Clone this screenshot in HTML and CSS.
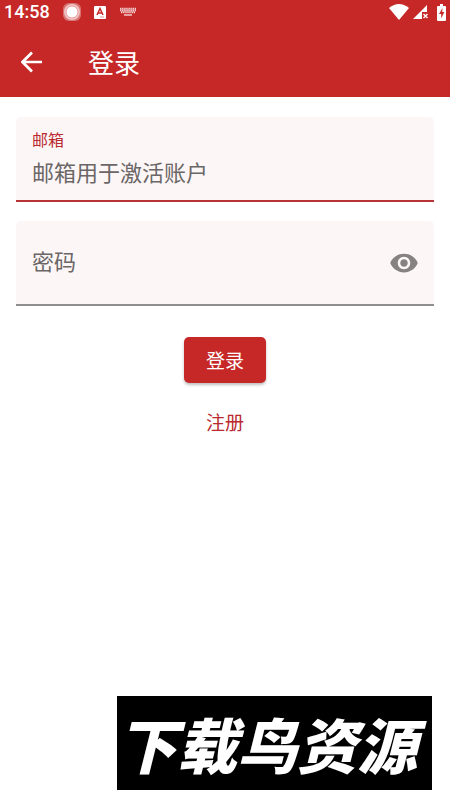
FILE: index.html
```html
<!DOCTYPE html>
<html lang="zh-CN">
<head>
<meta charset="utf-8">
<meta name="viewport" content="width=device-width, initial-scale=1">
<title>登录</title>
<link rel="stylesheet" href="styles.css">
</head>
<body>
<header class="top">
  <div class="status">
    <span class="clock">14:58</span>
    <svg class="record" width="20" height="20" viewBox="0 0 20 20" aria-hidden="true">
      <rect x="1" y="1" width="18" height="18" rx="6" fill="#fff" opacity=".35"/>
      <circle cx="10" cy="10" r="8" fill="#fff" opacity=".6"/>
      <circle cx="10" cy="10" r="6" fill="#fff" stroke="#e79a9a"/>
    </svg>
    <svg class="input-mode" width="12" height="14" viewBox="0 0 12 14" aria-hidden="true">
      <rect width="12" height="13" y="1" rx="1" fill="#fff"/>
      <path d="M3 10 6 3.5 9 10M4.2 8h3.6" fill="none" stroke="#c62828" stroke-width="1.5"/>
      <path d="M6 12h4" stroke="#e79a9a"/>
    </svg>
    <svg class="keyboard" width="16" height="10" viewBox="0 0 16 10" aria-hidden="true">
      <path d="M0 1.5h16M0 3.5h16M1 5.5h14" stroke="#fff" stroke-width="1.4" stroke-dasharray="1.4 .7" opacity=".8"/>
      <path d="M0 2.5h16M1 4.5h14" stroke="#fff" opacity=".35"/>
      <path d="M4 8h8" stroke="#fff" stroke-width="1.4" opacity=".8"/>
    </svg>
    <div class="signals">
      <svg width="20" height="16" viewBox="0 0 20 16" aria-hidden="true">
        <path d="M0 4Q10-4 20 4L10 16Z" fill="#fff"/>
      </svg>
      <svg width="16" height="16" viewBox="0 0 16 16" aria-hidden="true">
        <path d="M0 15 14 1v7H9v7Z" fill="#fff"/>
        <path d="m10.500 10 4 4m0-4-4 4" stroke="#fff" stroke-width="1.4"/>
      </svg>
      <svg width="9" height="17" viewBox="0 0 9 17" aria-hidden="true">
        <path d="M3 0h3v2h2q1 0 1 1v13q0 1-1 1H1q-1 0-1-1V3q0-1 1-1h2Z" fill="#fff"/>
        <path d="M5.500 4 2 10h2.200v4.500L7.300 8H5.200Z" fill="#c62828"/>
      </svg>
    </div>
  </div>
  <div class="appbar">
    <button class="back" type="button" aria-label="返回">
      <svg width="22" height="22" viewBox="0 0 22 22" aria-hidden="true">
        <path d="M21 11H2M11 1.500 1.500 11 11 20.500" fill="none" stroke="#fff" stroke-width="2.700"/>
      </svg>
    </button>
    <h1 class="title">登录</h1>
  </div>
</header>
<main class="content">
  <form class="form">
    <div class="field field-active">
      <label class="label" for="email">邮箱</label>
      <input class="input" id="email" type="email" placeholder="邮箱用于激活账户">
    </div>
    <div class="field field-password">
      <label class="resting-label" for="password">密码</label>
      <input class="input password" id="password" type="password">
      <button class="reveal" type="button" aria-label="显示密码">
        <svg width="28" height="20" viewBox="1 4 22 16" aria-hidden="true">
          <path fill="#868282" d="M12 4.500C7 4.500 2.730 7.610 1 12c1.730 4.390 6 7.500 11 7.500s9.270-3.110 11-7.500c-1.730-4.390-6-7.500-11-7.500zM12 17c-2.760 0-5-2.240-5-5s2.240-5 5-5 5 2.240 5 5-2.240 5-5 5zm0-8c-1.660 0-3 1.340-3 3s1.340 3 3 3 3-1.340 3-3-1.340-3-3-3z"/>
        </svg>
      </button>
    </div>
    <button class="submit" type="submit">登录</button>
    <a class="register" href="#register">注册</a>
  </form>
</main>
<footer class="brand">下载鸟资源</footer>
</body>
</html>
```
FILE: styles.css
```css
* {
  box-sizing: border-box;
}

body {
  display: flex;
  flex-direction: column;
  min-height: 100vh;
  margin: 0;
  background: #fff;
  font-family: Roboto, "Noto Sans CJK SC", sans-serif;
}

button,
input {
  margin: 0;
  padding: 0;
  border: 0;
  background: none;
  font: inherit;
}

svg {
  display: block;
}

.top {
  background: #c62828;
  color: #fff;
}

.status {
  display: flex;
  align-items: center;
  height: 24px;
  padding: 0 4px;
}

.clock {
  font-size: 18px;
  font-weight: 500;
  line-height: 24px;
}

.record {
  margin-left: 12px;
}

.input-mode {
  margin-left: 12px;
}

.keyboard {
  margin-left: 14px;
}

.signals {
  display: flex;
  align-items: center;
  gap: 4px;
  margin-left: auto;
}

.signals svg:last-child {
  margin-left: 4px;
}

.appbar {
  display: flex;
  align-items: center;
  gap: 36px;
  height: 73px;
  padding: 3px 11px 0;
}

.back {
  display: grid;
  place-items: center;
  width: 41px;
  height: 41px;
}

.title {
  margin: 0;
  padding-top: 4px;
  font-size: 26px;
  font-weight: 400;
  line-height: 40px;
}

.form {
  display: flex;
  flex-direction: column;
  align-items: center;
  padding: 20px 16px;
}

.field {
  width: 100%;
  min-height: 85px;
  padding: 0 16px;
  border-radius: 5px 5px 0 0;
  background: #fdf6f6;
}

.field-active {
  padding-top: 12px;
  border-bottom: 2px solid #b73335;
}

.label {
  display: block;
  color: #b92a30;
  font-size: 16px;
  line-height: 24px;
}

.input {
  display: block;
  width: 100%;
  height: 40px;
  outline: 0;
  color: #222;
  font-size: 22px;
}

.input::placeholder {
  color: #6b6767;
  opacity: 1;
}

.field-password {
  display: grid;
  grid-template-columns: 1fr 28px;
  align-items: center;
  margin-top: 19px;
  border-bottom: 2px solid #908d8d;
}

.resting-label,
.password {
  grid-row: 1;
  grid-column: 1;
}

.resting-label {
  color: #6b6767;
  font-size: 22px;
  line-height: 32px;
}

.submit {
  margin-top: 31px;
  padding: 11px 22px 7px;
  border-radius: 5px;
  background: #c62828;
  box-shadow: 0 2px 3px rgb(0 0 0 / 25%);
  color: #fff;
  font-size: 19px;
  line-height: 28px;
}

.register {
  margin-top: 27px;
  color: #b92a30;
  font-size: 19px;
  line-height: 28px;
  text-decoration: none;
}

.brand {
  align-self: flex-end;
  margin: auto 18px 10px;
  padding: 0 15px 0 0;
  background: #000;
  color: #fff;
  font-family: "Noto Sans CJK SC", sans-serif;
  font-size: 60px;
  font-style: italic;
  font-weight: 900;
  line-height: 94px;
  white-space: nowrap;
}
```
